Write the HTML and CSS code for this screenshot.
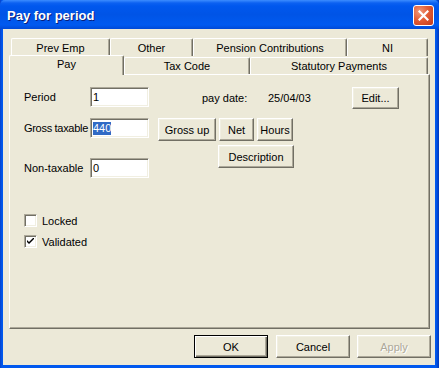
FILE: index.html
```html
<!DOCTYPE html>
<html lang="en">
<head>
  <meta charset="UTF-8">
  <title>Pay for period</title>
  <link rel="stylesheet" href="styles.css">
</head>
<body>

  <div class="window">
    <div class="titlebar">
      <span class="title">Pay for period</span>
      <div class="close">
        <svg width="11" height="11" viewBox="0 0 11 11">
          <path d="M1.5 1.5 L9.5 9.5 M9.5 1.5 L1.5 9.5" stroke="#fff" stroke-width="2.2" stroke-linecap="square"/>
        </svg>
      </div>
    </div>

    <div class="client">
      <div class="tabs">
        <div class="tab-row tab-row-back">
          <div class="tab" style="width: 99px">Prev Emp</div>
          <div class="tab" style="width: 83px">Other</div>
          <div class="tab" style="width: 154px">Pension Contributions</div>
          <div class="tab" style="width: 81px">NI</div>
        </div>
        <div class="tab-row tab-row-front">
          <div class="tab tab-active" style="width: 115px">Pay</div>
          <div class="tab" style="width: 126px">Tax Code</div>
          <div class="tab" style="width: 178px">Statutory Payments</div>
        </div>
      </div>

      <div class="panel">
        <div class="pay-top">
          <div class="fields">
            <div class="field-row">
              <span class="label">Period</span>
              <div class="edit">1</div>
            </div>
            <div class="field-row gross-row">
              <span class="label label-tight">Gross taxable</span>
              <div class="edit"><span class="selected">440</span></div>
            </div>
            <div class="field-row">
              <span class="label">Non-taxable</span>
              <div class="edit">0</div>
            </div>
          </div>

          <div class="side">
            <div class="side-row">
              <span class="pay-date-label">pay date:</span>
              <span class="pay-date">25/04/03</span>
              <button class="btn btn-edit">Edit...</button>
            </div>
            <div class="side-row calc-row">
              <button class="btn btn-gross">Gross up</button>
              <button class="btn btn-net">Net</button>
              <button class="btn btn-hours">Hours</button>
            </div>
            <div class="side-row desc-row">
              <button class="btn btn-desc">Description</button>
            </div>
          </div>
        </div>

        <div class="checks">
          <div class="check-row">
            <span class="checkbox"></span>
            <span>Locked</span>
          </div>
          <div class="check-row">
            <span class="checkbox">
              <svg width="7" height="7" viewBox="0 0 7 7">
                <path d="M0 2 L0 4 L2 6 L7 1 L7 -1 L2 4 Z" fill="#000"/>
              </svg>
            </span>
            <span>Validated</span>
          </div>
        </div>
      </div>

      <div class="dialog-actions">
        <button class="btn btn-dialog btn-default">OK</button>
        <button class="btn btn-dialog">Cancel</button>
        <button class="btn btn-dialog" disabled>Apply</button>
      </div>
    </div>
  </div>

</body>
</html>
```

FILE: styles.css
```css
body {
  margin: 0;
  font-family: "Liberation Sans", Arial, sans-serif;
  font-size: 11px;
  color: #000;
}

.window {
  width: 439px;
  height: 368px;
  display: flex;
  flex-direction: column;
  background: linear-gradient(to right, #0841C9 0, #0058EE 2px, #0058EE 436px, #0036B8 439px);
  box-sizing: border-box;
}

.titlebar {
  height: 29px;
  display: flex;
  align-items: center;
  justify-content: space-between;
  padding: 0 5px 0 7px;
  background: linear-gradient(to bottom, #3C8DFF 0, #0C61F1 3px, #0058EE 6px, #0054E6 50%, #005AF0 86%, #0049D6 100%);
  border-radius: 5px 5px 0 0;
}

.title {
  color: #fff;
  font-weight: bold;
  font-size: 13px;
  padding-top: 1px;
  text-shadow: 1px 1px #0A1E7A;
}

.close {
  width: 19px;
  height: 19px;
  border: 1px solid #fff;
  border-radius: 3px;
  background: radial-gradient(circle at 30% 30%, #F09A7C 0, #E35D36 45%, #C2391A 100%);
  display: flex;
  align-items: center;
  justify-content: center;
  margin-top: 2px;
}

.client {
  flex: 1;
  margin: 0 4px 3px 3px;
  background-color: #ECE9D8;
  padding: 9px 5px 7px 6px;
  display: flex;
  flex-direction: column;
}

.tab-row {
  display: flex;
  height: 18px;
}

.tab-row-back {
  margin-left: 2px;
}

.tab-row-front {
  align-items: flex-end;
}

.tab {
  box-sizing: border-box;
  height: 17px;
  display: flex;
  align-items: center;
  justify-content: center;
  border-top: 1px solid #fff;
  border-left: 1px solid #fff;
  border-right: 1px solid #716F64;
  box-shadow: inset -1px 0 #ACA899;
  border-radius: 2px 2px 0 0;
}

.tab-row-back .tab {
  height: 18px;
}

.tab-active {
  position: relative;
  z-index: 1;
  height: 20px;
  margin-bottom: -1px;
  padding-bottom: 3px;
  background-color: #ECE9D8;
}

.panel {
  box-sizing: border-box;
  height: 255px;
  border-top: 1px solid #fff;
  border-left: 1px solid #fff;
  border-right: 1px solid #716F64;
  border-bottom: 1px solid #716F64;
  box-shadow: inset -1px -1px #ACA899;
  padding: 12px 14px;
}

.pay-top {
  display: flex;
}

.fields {
  width: 125px;
}

.field-row {
  display: flex;
  align-items: center;
  height: 20px;
  margin-bottom: 11px;
}

.gross-row {
  margin-bottom: 20px;
}

.field-row:last-child {
  margin-bottom: 0;
}

.label {
  width: 66px;
  white-space: nowrap;
}

.label-tight {
  letter-spacing: -0.3px;
}

.edit {
  box-sizing: border-box;
  width: 59px;
  height: 20px;
  background-color: #fff;
  border: 1px solid;
  border-color: #ACA899 #fff #fff #ACA899;
  box-shadow: inset 1px 1px #716F64, inset -1px -1px #F1EFE2;
  padding: 0 2px;
  display: flex;
  align-items: center;
}

.selected {
  background-color: #316AC5;
  color: #fff;
  line-height: 13px;
}

.side {
  margin-left: 9px;
}

.side-row {
  display: flex;
  align-items: center;
}

.pay-date-label {
  margin-left: 44px;
  width: 66px;
}

.pay-date {
  width: 84px;
}

.calc-row {
  margin-top: 9px;
  gap: 3px;
}

.desc-row {
  margin-top: 4px;
}

.btn {
  box-sizing: border-box;
  height: 23px;
  padding: 0;
  font-family: "Liberation Sans", Arial, sans-serif;
  font-size: 11px;
  color: #000;
  background-color: #ECE9D8;
  border: 1px solid;
  border-color: #fff #716F64 #716F64 #fff;
  box-shadow: inset -1px -1px #ACA899, inset 1px 1px #F1EFE2;
  cursor: pointer;
}

.btn-edit {
  width: 47px;
  height: 22px;
}

.btn-gross {
  width: 58px;
}

.btn-net {
  width: 35px;
}

.btn-hours {
  width: 36px;
}

.btn-desc {
  width: 76px;
  margin-left: 60px;
}

.checks {
  margin-top: 36px;
}

.check-row {
  display: flex;
  align-items: center;
  height: 13px;
  gap: 5px;
  margin-bottom: 8px;
}

.checkbox {
  box-sizing: border-box;
  width: 13px;
  height: 13px;
  background-color: #fff;
  border: 1px solid;
  border-color: #ACA899 #fff #fff #ACA899;
  box-shadow: inset 1px 1px #716F64, inset -1px -1px #F1EFE2;
  display: flex;
  align-items: center;
  justify-content: center;
}

.dialog-actions {
  display: flex;
  justify-content: flex-end;
  gap: 7px;
  margin-top: 6px;
  margin-right: -1px;
}

.btn-dialog {
  width: 74px;
}

.btn-default {
  border-color: #000;
  box-shadow: inset 1px 1px #fff, inset -1px -1px #716F64, inset -2px -2px #ACA899;
  margin-right: 1px;
}

.btn-dialog:disabled {
  color: #ACA899;
  text-shadow: 1px 1px #fff;
  cursor: default;
}
```
